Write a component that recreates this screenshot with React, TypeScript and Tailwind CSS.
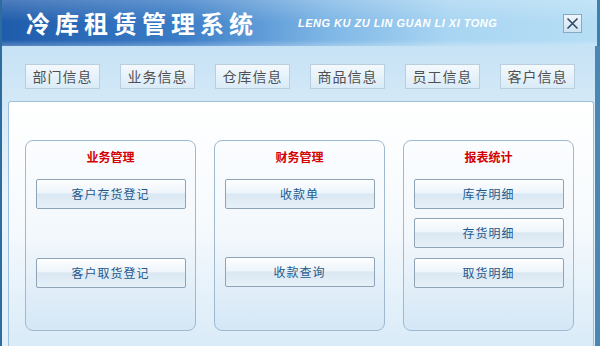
import React from "react";

const cjk = { fontFamily: '"Noto Sans CJK SC", "Noto Sans", sans-serif' };

function NavBtn({ label }: { label: string }) {
  return (
    <div
      className="w-[75px] h-[25px] flex items-center justify-center border border-[#b9cfe0] bg-gradient-to-b from-[#f4f9fd] to-[#d9ebf8] text-[14px] tracking-[1px] text-[#505050]"
      style={cjk}
    >
      {label}
    </div>
  );
}

function Btn({ label, className = "" }: { label: string; className?: string }) {
  return (
    <div
      className={
        "w-[150px] h-[30px] flex items-center justify-center rounded-[2px] border border-[#8ea3b5] bg-[linear-gradient(to_bottom,#fdfeff_0%,#eef5fb_45%,#dae8f3_50%,#e6f0f8_100%)] text-[12px] tracking-[1px] text-[#1f5a8c] " +
        className
      }
      style={cjk}
    >
      {label}
    </div>
  );
}

function Group({ title, children }: { title: string; children: React.ReactNode }) {
  return (
    <div className="w-[171px] h-[191px] rounded-[8px] border border-[#9fb9d0] bg-gradient-to-b from-[#fbfdff] via-[#f3f8fc] to-[#d4e7f6] flex flex-col items-center pt-[8px]">
      <div className="text-[12px] font-bold text-[#d40000] leading-[16px]" style={cjk}>
        {title}
      </div>
      <div className="flex flex-col mt-[14px]">{children}</div>
    </div>
  );
}

export default function App() {
  return (
    <div className="w-[600px] h-[346px] overflow-hidden flex bg-[#2b6a9c]">
      <div className="w-[2px] bg-[#2d6c9e]" />
      <div className="flex-1 flex flex-col overflow-hidden">
        {/* header */}
        <div className="h-[46px] relative flex items-center bg-[linear-gradient(to_right,#1f5bab_0%,#3a7cc6_30%,#7fb7e6_55%,#a9d5f2_75%,#b6def5_100%)] border-r-[3px] border-[#3f7fb0]">
          <div className="absolute inset-x-0 top-0 h-[22px] bg-gradient-to-b from-white/20 to-white/0" />
          <div className="absolute inset-x-0 bottom-0 h-[6px] bg-gradient-to-b from-white/0 to-white/25" />
          <div
            className="relative ml-[24px] text-[24px] font-bold text-white tracking-[5px] leading-none"
            style={cjk}
          >
            冷库租赁管理系统
          </div>
          <div
            className="relative ml-[40px] text-[11px] font-bold italic text-white tracking-[0.5px] leading-none"
            style={{ fontFamily: '"Liberation Sans", Arial, sans-serif' }}
          >
            LENG KU ZU LIN GUAN LI XI TONG
          </div>
          <div className="relative ml-auto mr-[15px] w-[19px] h-[19px] border border-[#8aa8c2] bg-gradient-to-b from-[#eef6fc] to-[#cfe3f3] flex items-center justify-center">
            <svg width="13" height="13" viewBox="0 0 13 13">
              <path d="M1.5 1.5 L11.5 11.5 M11.5 1.5 L1.5 11.5" stroke="#2f4a66" strokeWidth="1.6" />
            </svg>
          </div>
        </div>
        {/* body */}
        <div className="flex-1 flex flex-col bg-gradient-to-b from-[#c6e2f5] via-[#eaf4fb] to-[#e3f0fa] border-r-[5px] border-[#4b87b5]">
          <div className="flex gap-[20px] pl-[23px] pt-[18px]">
            {["部门信息", "业务信息", "仓库信息", "商品信息", "员工信息", "客户信息"].map((l) => (
              <NavBtn key={l} label={l} />
            ))}
          </div>
          <div className="ml-[6px] mr-[1px] mt-[12px] flex-1 rounded-t-[3px] border border-b-0 border-[#9cc0dc] bg-gradient-to-b from-white via-[#f6fafd] to-[#d9ebf8] pl-[16px] pt-[38px]">
            <div className="flex gap-[18px]">
              <Group title="业务管理">
                <Btn label="客户存货登记" />
                <Btn label="客户取货登记" className="mt-[49px]" />
              </Group>
              <Group title="财务管理">
                <Btn label="收款单" />
                <Btn label="收款查询" className="mt-[48px]" />
              </Group>
              <Group title="报表统计">
                <Btn label="库存明细" />
                <Btn label="存货明细" className="mt-[9px]" />
                <Btn label="取货明细" className="mt-[10px]" />
              </Group>
            </div>
          </div>
        </div>
      </div>
    </div>
  );
}
